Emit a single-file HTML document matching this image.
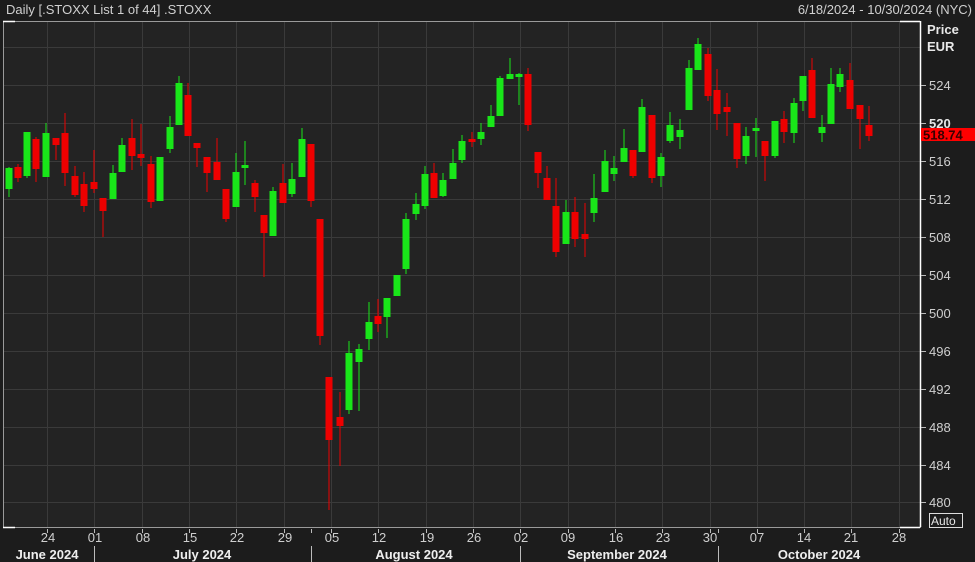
<!DOCTYPE html>
<html><head><meta charset="utf-8"><style>
html,body{margin:0;padding:0;background:#1c1c1c;width:975px;height:562px;overflow:hidden}
svg{display:block}
text{font-family:"Liberation Sans Narrow","Liberation Sans",sans-serif;}
</style></head><body>
<svg width="975" height="562" viewBox="0 0 975 562" xmlns="http://www.w3.org/2000/svg">
<rect x="0" y="0" width="975" height="562" fill="#1c1c1c"/>
<rect x="3" y="21" width="917" height="506" fill="#232323"/>
<g stroke="#3a3a3a" stroke-width="1">
<line x1="3" x2="920" y1="85.5" y2="85.5"/><line x1="3" x2="920" y1="123.5" y2="123.5"/><line x1="3" x2="920" y1="161.5" y2="161.5"/><line x1="3" x2="920" y1="199.5" y2="199.5"/><line x1="3" x2="920" y1="237.5" y2="237.5"/><line x1="3" x2="920" y1="275.5" y2="275.5"/><line x1="3" x2="920" y1="313.5" y2="313.5"/><line x1="3" x2="920" y1="351.5" y2="351.5"/><line x1="3" x2="920" y1="389.5" y2="389.5"/><line x1="3" x2="920" y1="427.5" y2="427.5"/><line x1="3" x2="920" y1="465.5" y2="465.5"/><line x1="3" x2="920" y1="502.5" y2="502.5"/><line x1="3" x2="920" y1="47.5" y2="47.5"/>
<line y1="21" y2="527" x1="47.5" x2="47.5"/><line y1="21" y2="527" x1="94.5" x2="94.5"/><line y1="21" y2="527" x1="142.5" x2="142.5"/><line y1="21" y2="527" x1="189.5" x2="189.5"/><line y1="21" y2="527" x1="236.5" x2="236.5"/><line y1="21" y2="527" x1="284.5" x2="284.5"/><line y1="21" y2="527" x1="331.5" x2="331.5"/><line y1="21" y2="527" x1="378.5" x2="378.5"/><line y1="21" y2="527" x1="426.5" x2="426.5"/><line y1="21" y2="527" x1="473.5" x2="473.5"/><line y1="21" y2="527" x1="520.5" x2="520.5"/><line y1="21" y2="527" x1="568.5" x2="568.5"/><line y1="21" y2="527" x1="615.5" x2="615.5"/><line y1="21" y2="527" x1="662.5" x2="662.5"/><line y1="21" y2="527" x1="710.5" x2="710.5"/><line y1="21" y2="527" x1="757.5" x2="757.5"/><line y1="21" y2="527" x1="804.5" x2="804.5"/><line y1="21" y2="527" x1="851.5" x2="851.5"/><line y1="21" y2="527" x1="899.5" x2="899.5"/>
</g>
<g fill="none" stroke="#9a9a9a"><path d="M3.5 21.5H920.5V527.5H3.5Z"/></g>
<g stroke="#ffffff" stroke-width="1.5" fill="none"><path d="M3 21.5H15M3 527.5H15M920 21.5H900M920.5 21V527M920 527.5H900"/></g>
<g id="c"></g>
<g fill="#ee0000">
<rect x="17.5" y="164" width="1" height="18"/><rect x="35.5" y="137" width="1" height="45"/><rect x="55.5" y="138" width="1" height="22"/><rect x="64.5" y="113" width="1" height="73"/><rect x="74.5" y="166" width="1" height="31"/><rect x="83.5" y="172" width="1" height="40"/><rect x="93.5" y="150" width="1" height="43"/><rect x="102.5" y="198" width="1" height="39"/><rect x="131.5" y="119" width="1" height="51"/><rect x="140.5" y="124" width="1" height="42"/><rect x="150.5" y="156" width="1" height="52"/><rect x="187.5" y="83" width="1" height="53"/><rect x="196.5" y="143" width="1" height="24"/><rect x="206.5" y="157" width="1" height="35"/><rect x="216.5" y="138" width="1" height="42"/><rect x="225.5" y="189" width="1" height="33"/><rect x="254.5" y="180" width="1" height="32"/><rect x="263.5" y="215" width="1" height="62"/><rect x="282.5" y="164" width="1" height="39"/><rect x="310.5" y="144" width="1" height="63"/><rect x="319.5" y="219" width="1" height="126"/><rect x="328.5" y="377" width="1" height="133"/><rect x="339.5" y="392" width="1" height="74"/><rect x="377.5" y="299" width="1" height="33"/><rect x="433.5" y="163" width="1" height="35"/><rect x="471.5" y="132" width="1" height="15"/><rect x="527.5" y="68" width="1" height="63"/><rect x="537.5" y="152" width="1" height="36"/><rect x="546.5" y="166" width="1" height="34"/><rect x="555.5" y="178" width="1" height="79"/><rect x="574.5" y="197" width="1" height="50"/><rect x="584.5" y="203" width="1" height="54"/><rect x="632.5" y="150" width="1" height="28"/><rect x="651.5" y="115" width="1" height="68"/><rect x="707.5" y="48" width="1" height="53"/><rect x="716.5" y="69" width="1" height="61"/><rect x="726.5" y="93" width="1" height="43"/><rect x="736.5" y="123" width="1" height="45"/><rect x="764.5" y="141" width="1" height="40"/><rect x="783.5" y="111" width="1" height="32"/><rect x="811.5" y="58" width="1" height="60"/><rect x="849.5" y="63" width="1" height="46"/><rect x="859.5" y="105" width="1" height="44"/><rect x="868.5" y="106" width="1" height="35"/>
<rect x="14.5" y="167" width="7" height="11"/><rect x="32.5" y="139" width="7" height="30"/><rect x="52.5" y="138" width="7" height="7"/><rect x="61.5" y="133" width="7" height="40"/><rect x="71.5" y="176" width="7" height="19"/><rect x="80.5" y="184" width="7" height="22"/><rect x="90.5" y="182" width="7" height="7"/><rect x="99.5" y="198" width="7" height="13"/><rect x="128.5" y="138" width="7" height="18"/><rect x="137.5" y="154" width="7" height="4"/><rect x="147.5" y="164" width="7" height="38"/><rect x="184.5" y="95" width="7" height="41"/><rect x="193.5" y="143" width="7" height="5"/><rect x="203.5" y="157" width="7" height="16"/><rect x="213.5" y="162" width="7" height="18"/><rect x="222.5" y="189" width="7" height="30"/><rect x="251.5" y="183" width="7" height="14"/><rect x="260.5" y="215" width="7" height="18"/><rect x="279.5" y="183" width="7" height="20"/><rect x="307.5" y="144" width="7" height="57"/><rect x="316.5" y="219" width="7" height="117"/><rect x="325.5" y="377" width="7" height="63"/><rect x="336.5" y="417" width="7" height="9"/><rect x="374.5" y="316" width="7" height="8"/><rect x="430.5" y="173" width="7" height="25"/><rect x="468.5" y="139" width="7" height="3"/><rect x="524.5" y="74" width="7" height="51"/><rect x="534.5" y="152" width="7" height="21"/><rect x="543.5" y="178" width="7" height="22"/><rect x="552.5" y="206" width="7" height="46"/><rect x="571.5" y="212" width="7" height="27"/><rect x="581.5" y="234" width="7" height="5"/><rect x="629.5" y="150" width="7" height="26"/><rect x="648.5" y="115" width="7" height="63"/><rect x="704.5" y="54" width="7" height="42"/><rect x="713.5" y="90" width="7" height="24"/><rect x="723.5" y="107" width="7" height="5"/><rect x="733.5" y="123" width="7" height="36"/><rect x="761.5" y="141" width="7" height="15"/><rect x="780.5" y="119" width="7" height="13"/><rect x="808.5" y="70" width="7" height="48"/><rect x="846.5" y="80" width="7" height="29"/><rect x="856.5" y="105" width="7" height="14"/><rect x="865.5" y="125" width="7" height="11"/>
</g>
<g fill="#19e619">
<rect x="8.5" y="167" width="1" height="30"/><rect x="26.5" y="132" width="1" height="46"/><rect x="45.5" y="123" width="1" height="54"/><rect x="112.5" y="165" width="1" height="34"/><rect x="121.5" y="138" width="1" height="34"/><rect x="159.5" y="157" width="1" height="44"/><rect x="169.5" y="116" width="1" height="37"/><rect x="178.5" y="76" width="1" height="49"/><rect x="235.5" y="153" width="1" height="54"/><rect x="244.5" y="141" width="1" height="44"/><rect x="272.5" y="187" width="1" height="49"/><rect x="291.5" y="163" width="1" height="34"/><rect x="301.5" y="128" width="1" height="49"/><rect x="348.5" y="341" width="1" height="73"/><rect x="358.5" y="344" width="1" height="67"/><rect x="368.5" y="302" width="1" height="48"/><rect x="386.5" y="298" width="1" height="40"/><rect x="405.5" y="213" width="1" height="61"/><rect x="415.5" y="193" width="1" height="27"/><rect x="424.5" y="166" width="1" height="43"/><rect x="442.5" y="173" width="1" height="24"/><rect x="452.5" y="149" width="1" height="30"/><rect x="461.5" y="135" width="1" height="28"/><rect x="480.5" y="123" width="1" height="22"/><rect x="490.5" y="105" width="1" height="22"/><rect x="499.5" y="76" width="1" height="40"/><rect x="509.5" y="58" width="1" height="21"/><rect x="518.5" y="73" width="1" height="32"/><rect x="565.5" y="200" width="1" height="44"/><rect x="593.5" y="174" width="1" height="48"/><rect x="604.5" y="150" width="1" height="42"/><rect x="613.5" y="156" width="1" height="25"/><rect x="623.5" y="129" width="1" height="33"/><rect x="641.5" y="99" width="1" height="53"/><rect x="660.5" y="153" width="1" height="34"/><rect x="669.5" y="112" width="1" height="31"/><rect x="679.5" y="119" width="1" height="30"/><rect x="688.5" y="60" width="1" height="50"/><rect x="697.5" y="38" width="1" height="32"/><rect x="745.5" y="127" width="1" height="37"/><rect x="755.5" y="118" width="1" height="39"/><rect x="774.5" y="121" width="1" height="37"/><rect x="793.5" y="98" width="1" height="45"/><rect x="802.5" y="76" width="1" height="35"/><rect x="821.5" y="115" width="1" height="27"/><rect x="830.5" y="68" width="1" height="56"/><rect x="839.5" y="68" width="1" height="24"/>
<rect x="5.5" y="168" width="7" height="21"/><rect x="23.5" y="132" width="7" height="44"/><rect x="42.5" y="133" width="7" height="44"/><rect x="109.5" y="173" width="7" height="26"/><rect x="118.5" y="145" width="7" height="27"/><rect x="156.5" y="157" width="7" height="44"/><rect x="166.5" y="127" width="7" height="22"/><rect x="175.5" y="83" width="7" height="42"/><rect x="232.5" y="172" width="7" height="35"/><rect x="241.5" y="165" width="7" height="3"/><rect x="269.5" y="191" width="7" height="45"/><rect x="288.5" y="179" width="7" height="15"/><rect x="298.5" y="139" width="7" height="38"/><rect x="345.5" y="353" width="7" height="57"/><rect x="355.5" y="349" width="7" height="13"/><rect x="365.5" y="322" width="7" height="17"/><rect x="383.5" y="298" width="7" height="19"/><rect x="393.5" y="275" width="7" height="21"/><rect x="402.5" y="219" width="7" height="50"/><rect x="412.5" y="204" width="7" height="10"/><rect x="421.5" y="174" width="7" height="32"/><rect x="439.5" y="180" width="7" height="16"/><rect x="449.5" y="163" width="7" height="16"/><rect x="458.5" y="141" width="7" height="19"/><rect x="477.5" y="132" width="7" height="7"/><rect x="487.5" y="116" width="7" height="11"/><rect x="496.5" y="78" width="7" height="38"/><rect x="506.5" y="74" width="7" height="5"/><rect x="515.5" y="74" width="7" height="3"/><rect x="562.5" y="212" width="7" height="32"/><rect x="590.5" y="198" width="7" height="15"/><rect x="601.5" y="161" width="7" height="31"/><rect x="610.5" y="168" width="7" height="6"/><rect x="620.5" y="148" width="7" height="14"/><rect x="638.5" y="107" width="7" height="45"/><rect x="657.5" y="157" width="7" height="19"/><rect x="666.5" y="125" width="7" height="16"/><rect x="676.5" y="130" width="7" height="7"/><rect x="685.5" y="68" width="7" height="42"/><rect x="694.5" y="44" width="7" height="26"/><rect x="742.5" y="136" width="7" height="20"/><rect x="752.5" y="128" width="7" height="3"/><rect x="771.5" y="121" width="7" height="35"/><rect x="790.5" y="103" width="7" height="30"/><rect x="799.5" y="76" width="7" height="25"/><rect x="818.5" y="127" width="7" height="6"/><rect x="827.5" y="84" width="7" height="40"/><rect x="836.5" y="74" width="7" height="13"/>
</g>
<text x="6" y="14" fill="#d0d0d0" font-size="13">Daily [.STOXX List 1 of 44] .STOXX</text>
<text x="972" y="14" fill="#d0d0d0" font-size="13" text-anchor="end">6/18/2024 - 10/30/2024 (NYC)</text>
<g fill="#e8e8e8" font-size="13" font-weight="bold"><text x="927" y="34">Price</text><text x="927" y="51">EUR</text></g>
<g stroke="#bbb"><path d="M921 85.5h5M921 123.5h5M921 161.5h5M921 199.5h5M921 237.5h5M921 275.5h5M921 313.5h5M921 351.5h5M921 389.5h5M921 427.5h5M921 465.5h5M921 502.5h5"/></g>
<g fill="#cfcfcf" font-size="13"><text x="929" y="90">524</text><text x="929" y="166">516</text><text x="929" y="204">512</text><text x="929" y="242">508</text><text x="929" y="280">504</text><text x="929" y="318">500</text><text x="929" y="356">496</text><text x="929" y="394">492</text><text x="929" y="432">488</text><text x="929" y="470">484</text><text x="929" y="507">480</text></g>
<text x="929" y="128" fill="#e8e8e8" font-size="13" font-weight="bold">520</text>
<rect x="921" y="128" width="54" height="13" fill="#ff0000"/>
<text x="923" y="139.5" fill="#3a0000" font-size="13" font-weight="bold">518.74</text>
<rect x="929.5" y="513.5" width="33" height="14" fill="none" stroke="#ddd"/>
<text x="931" y="525" fill="#e8e8e8" font-size="12">Auto</text>
<g stroke="#bbb"><path d="M47.5 529v4M94.5 529v4M142.5 529v4M189.5 529v4M236.5 529v4M284.5 529v4M311.5 529v4M331.5 529v4M378.5 529v4M426.5 529v4M473.5 529v4M520.5 529v4M568.5 529v4M615.5 529v4M662.5 529v4M710.5 529v4M718.5 529v4M757.5 529v4M804.5 529v4M851.5 529v4M899.5 529v4"/>
<path d="M94.5 546v16M311.5 546v16M520.5 546v16M718.5 546v16"/></g>
<g fill="#cfcfcf" font-size="13" text-anchor="middle"><text x="48" y="542">24</text><text x="95" y="542">01</text><text x="143" y="542">08</text><text x="190" y="542">15</text><text x="237" y="542">22</text><text x="285" y="542">29</text><text x="332" y="542">05</text><text x="379" y="542">12</text><text x="427" y="542">19</text><text x="474" y="542">26</text><text x="521" y="542">02</text><text x="568" y="542">09</text><text x="616" y="542">16</text><text x="663" y="542">23</text><text x="710" y="542">30</text><text x="757" y="542">07</text><text x="804" y="542">14</text><text x="851" y="542">21</text><text x="899" y="542">28</text></g>
<g fill="#eeeeee" font-size="13" font-weight="bold" text-anchor="middle"><text x="47" y="559">June 2024</text><text x="202" y="559">July 2024</text><text x="414" y="559">August 2024</text><text x="617" y="559">September 2024</text><text x="819" y="559">October 2024</text></g>
</svg>
</body></html>
